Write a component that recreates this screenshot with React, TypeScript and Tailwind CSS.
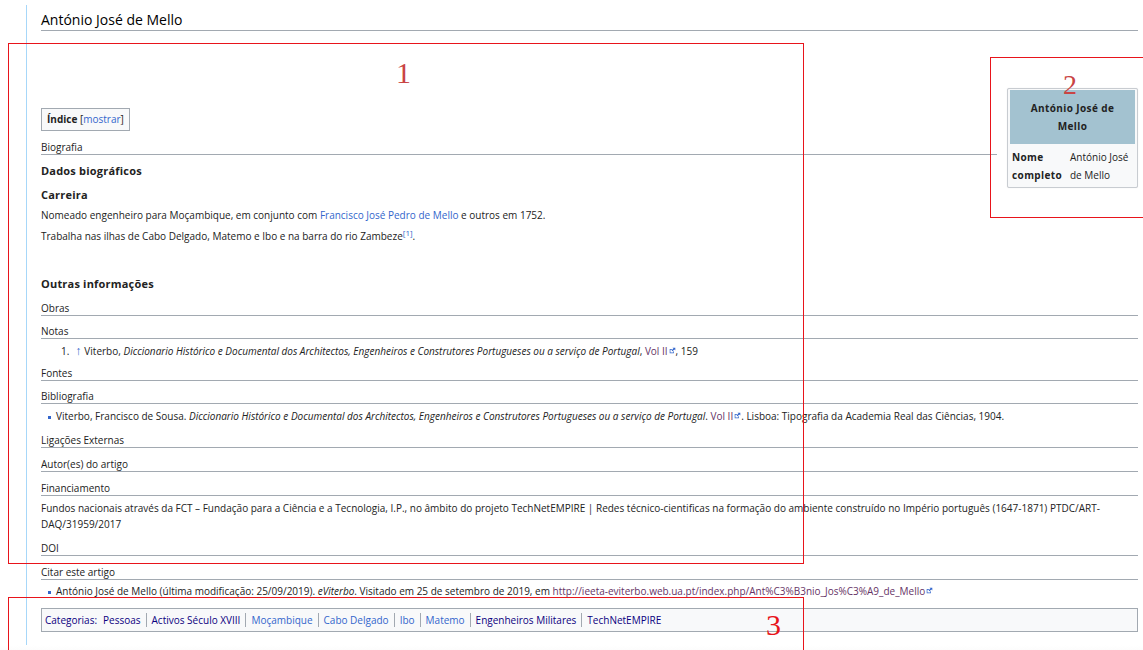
import type { ReactNode } from 'react'

const visited = 'text-[#0b0080]'
const link = 'text-[#3366cc]'

function ExtIcon() {
  return (
    <svg width="7" height="7" viewBox="0 0 10 10" className="ml-px inline-block align-[1px]">
      <path d="M1 3h4v1H2v4h4V6h1v3H1z" fill="#3366cc" />
      <path d="M5 1h4v4L7.6 3.6 5 6.2 3.8 5l2.6-2.6z" fill="#3366cc" />
    </svg>
  )
}

function Heading({ children, className }: { children: ReactNode; className: string }) {
  return (
    <div
      className={`overflow-hidden border-b border-[#a2a9b1] text-[10px] leading-[14px] text-[#222] ${className}`}
    >
      {children}
    </div>
  )
}

function SubHeading({ children, className }: { children: ReactNode; className: string }) {
  return (
    <div className={`text-[11px] font-bold leading-[14px] tracking-[0.2px] text-[#222] ${className}`}>
      {children}
    </div>
  )
}

function Bullet({ children, className }: { children: ReactNode; className: string }) {
  return (
    <div className={`flex items-start text-[10px] leading-[16px] text-[#222] ${className}`}>
      <span className="mt-[8px] ml-[7px] mr-[5px] h-[3px] w-[3px] shrink-0 bg-[#3366cc]" />
      <span>{children}</span>
    </div>
  )
}

function Infobox() {
  return (
    <div className="float-right ml-[10px] w-[131px] rounded-[2px] border border-[#c8ccd1] bg-[#f8f9fa] px-[2px] pt-px pb-[3px] shadow-[0_0_1px_rgba(0,0,0,0.15)]">
      <div className="bg-[#a3c2d0] py-[9px] text-center text-[10px] font-bold leading-[18px] tracking-[0.4px] text-[#222]">
        António José de
        <br />
        Mello
      </div>
      <div className="mt-[4px] flex px-[2px] text-[10px] leading-[18px] text-[#222]">
        <div className="w-[58px] shrink-0 font-bold tracking-[0.4px]">
          Nome
          <br />
          completo
        </div>
        <div>
          António José
          <br />
          de Mello
        </div>
      </div>
    </div>
  )
}

const categories: Array<{ name: string; seen: boolean }> = [
  { name: 'Pessoas', seen: true },
  { name: 'Activos Século XVIII', seen: true },
  { name: 'Moçambique', seen: false },
  { name: 'Cabo Delgado', seen: false },
  { name: 'Ibo', seen: false },
  { name: 'Matemo', seen: false },
  { name: 'Engenheiros Militares', seen: true },
  { name: 'TechNetEMPIRE', seen: true },
]

function Categories() {
  return (
    <div className="mt-[9px] flex h-[24px] items-center border border-[#a2a9b1] bg-[#f8f9fa] pl-[3px] text-[10px] leading-[14px]">
      <span className={`${visited} mr-[6px]`}>Categorias:</span>
      {categories.map((c, i) => (
        <span
          key={c.name}
          className={`${i > 0 ? 'border-l border-[#a2a9b1] pl-[5px]' : ''} pr-[5px] ${c.seen ? visited : link}`}
        >
          {c.name}
        </span>
      ))}
    </div>
  )
}

function Article() {
  return (
    <div className="text-[#222]">
      <div className="border-b border-[#a2a9b1] pt-[5px] text-[14px] leading-[20px] text-black">
        António José de Mello
      </div>
      <div className="pt-[57px]">
        <Infobox />
        <div className="mt-[20px] inline-block border border-[#a2a9b1] bg-[#f8f9fa] px-[5px] text-[10px] leading-[21px]">
          <span className="font-bold">Índice</span> <span className="text-[#222]">[</span>
          <span className={link}>mostrar</span>
          <span>]</span>
        </div>
        <Heading className="mt-[9px]">Biografia</Heading>
        <SubHeading className="mt-[9px]">Dados biográficos</SubHeading>
        <SubHeading className="mt-[10px]">Carreira</SubHeading>
        <p className="mt-[5px] text-[10px] leading-[16px]">
          Nomeado engenheiro para Moçambique, em conjunto com{' '}
          <span className={link}>Francisco José Pedro de Mello</span> e outros em 1752.
        </p>
        <p className="mt-[5px] text-[10px] leading-[16px]">
          Trabalha nas ilhas de Cabo Delgado, Matemo e Ibo e na barra do rio Zambeze
          <sup className={`${link} text-[8px]`}>[1]</sup>.
        </p>
        <SubHeading className="mt-[33px]">Outras informações</SubHeading>
        <Heading className="mt-[10px]">Obras</Heading>
        <Heading className="mt-[8px]">Notas</Heading>
        <div className="mt-[4px] flex text-[10px] leading-[16px]">
          <span className="ml-[20px] mr-[6px]">1.</span>
          <span className={`${link} mr-[3px] text-[12px] leading-[15px]`}>↑</span>
          <span>
            Viterbo,{' '}
            <i>
              Diccionario Histórico e Documental dos Architectos, Engenheiros e Construtores
              Portugueses ou a serviço de Portugal
            </i>
            , <span className="text-[#663366]">Vol II</span>
            <ExtIcon />, 159
          </span>
        </div>
        <Heading className="mt-[7px]">Fontes</Heading>
        <Heading className="mt-[8px]">Bibliografia</Heading>
        <Bullet className="mt-[4px]">
          Viterbo, Francisco de Sousa.{' '}
          <i>
            Diccionario Histórico e Documental dos Architectos, Engenheiros e Construtores Portugueses
            ou a serviço de Portugal
          </i>
          . <span className="text-[#663366]">Vol II</span>
          <ExtIcon />. Lisboa: Tipografia da Academia Real das Ciências, 1904.
        </Bullet>
        <Heading className="mt-[9px]">Ligações Externas</Heading>
        <Heading className="mt-[9px]">Autor(es) do artigo</Heading>
        <Heading className="mt-[9px]">Financiamento</Heading>
        <p className="mt-[4px] text-[10px] leading-[16px]">
          Fundos nacionais através da FCT – Fundação para a Ciência e a Tecnologia, I.P., no âmbito do
          projeto TechNetEMPIRE | Redes técnico-cientificas na formação do ambiente construído no
          Império português (1647-1871) PTDC/ART-DAQ/31959/2017
        </p>
        <Heading className="mt-[9px]">DOI</Heading>
        <Heading className="mt-[9px]">Citar este artigo</Heading>
        <Bullet className="mt-[3px]">
          António José de Mello (última modificação: 25/09/2019). <i>eViterbo</i>. Visitado em 25 de
          setembro de 2019, em{' '}
          <span className="text-[#663366]">
            http://ieeta-eviterbo.web.ua.pt/index.php/Ant%C3%B3nio_Jos%C3%A9_de_Mello
          </span>
          <ExtIcon />
        </Bullet>
        <Categories />
      </div>
    </div>
  )
}

export default function App() {
  return (
    <div className="relative h-[650px] w-[1143px] overflow-hidden bg-white font-['Open_Sans',sans-serif]">
      <div className="ml-[26px] mt-[5px] h-[640px] border-l border-[#a7d7f9] bg-white pl-[14px] pr-[5px]">
        <Article />
      </div>
      <div className="h-[20px] bg-gradient-to-b from-white to-[#f4f4f4]" />

      {/* annotation frames drawn over the page */}
      <div className="pointer-events-none absolute left-[8px] top-[43px] h-[521px] w-[796px] border-[1.5px] border-[#e8141b]" />
      <div className="pointer-events-none absolute left-[990px] top-[57px] h-[161px] w-[170px] border-[1.5px] border-[#e8141b]" />
      <div className="pointer-events-none absolute left-[8px] top-[597px] h-[80px] w-[796px] border-[1.5px] border-[#e8141b]" />
      <span className="absolute left-[396px] top-[55px] font-['Liberation_Serif',serif] text-[30px] leading-[36px] text-[#c94444]">
        1
      </span>
      <span className="absolute left-[1063px] top-[67px] font-['Liberation_Serif',serif] text-[28px] leading-[36px] text-[#c94444]">
        2
      </span>
      <span className="absolute left-[766px] top-[607px] font-['Liberation_Serif',serif] text-[30px] leading-[36px] text-[#e8141b]">
        3
      </span>
    </div>
  )
}
